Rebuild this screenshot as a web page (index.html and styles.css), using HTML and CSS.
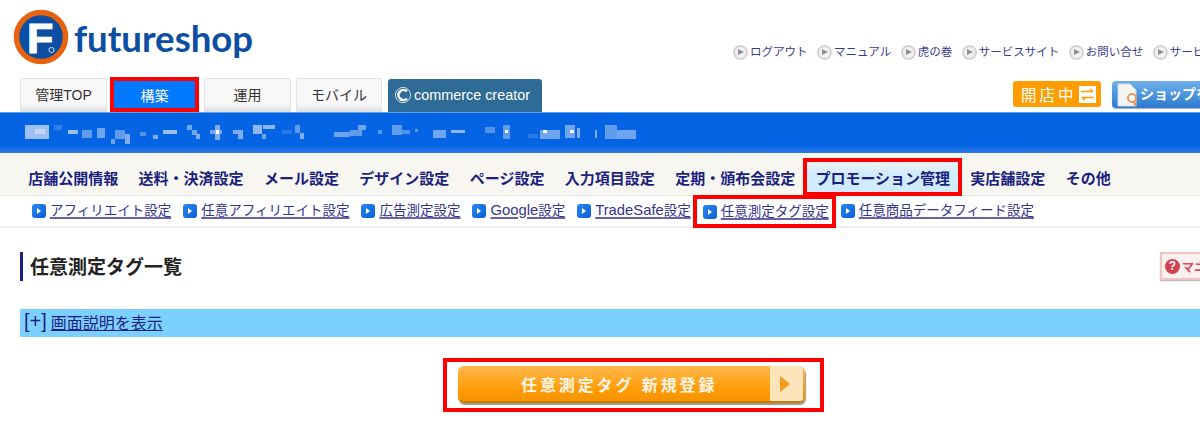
FILE: index.html
```html
<!DOCTYPE html>
<html lang="ja">
  <head>
    <meta charset="UTF-8" />
    <meta name="viewport" content="width=device-width, initial-scale=1.0" />
    <title>任意測定タグ一覧</title>
    <link rel="stylesheet" href="styles.css">
  </head>
  <body>
    <header class="header-top">
      <div class="logo">
        <svg class="logo-mark" width="56" height="56" viewBox="0 0 56 56">
          <circle cx="28" cy="28" r="24.5" fill="#0b4ea2" stroke="#e8630f" stroke-width="5.5" />
          <text x="14" y="44" class="logo-f">F</text>
          <circle cx="38.5" cy="41" r="2.6" fill="none" stroke="#cfe0f2" stroke-width="1" />
        </svg>
        <span class="logo-text">futureshop</span>
      </div>
      <ul class="top-links">
        <li><i class="play"></i>ログアウト</li>
        <li><i class="play"></i>マニュアル</li>
        <li><i class="play"></i>虎の巻</li>
        <li><i class="play"></i>サービスサイト</li>
        <li><i class="play"></i>お問い合せ</li>
        <li><i class="play"></i>サービス</li>
      </ul>
    </header>

    <div class="tab-row">
      <a class="tab">管理TOP</a>
      <a class="tab tab-active">構築</a>
      <a class="tab tab-wide">運用</a>
      <a class="tab tab-mobile">モバイル</a>
      <a class="tab-cc">
        <svg width="18" height="18" viewBox="0 0 18 18">
          <circle cx="9" cy="9" r="7.6" fill="none" stroke="#cfe0ec" stroke-width="1" />
          <path d="M13 5.4a5 5 0 1 0 0 7.2" fill="none" stroke="#fff" stroke-width="2.6" />
        </svg>
        commerce creator
      </a>
      <div class="status-btn">
        開店中
        <svg width="17" height="17" viewBox="0 0 17 17">
          <rect width="17" height="17" fill="#fff" />
          <path d="M2 5.5h12M11 3l3 2.5M15 11.5H3M6 14l-3-2.5" fill="none" stroke="#ff9d00" stroke-width="1.6" />
        </svg>
      </div>
      <div class="shop-btn">
        <svg width="24" height="26" viewBox="0 0 24 26">
          <path d="M2 2h12l6 6v16H2z" fill="#f4f4f0" stroke="#cfd8e0" />
          <circle cx="16" cy="16" r="4" fill="#fff" stroke="#e8965c" stroke-width="2" />
          <path d="M18 20l2 4" stroke="#e8965c" stroke-width="2.4" />
        </svg>
        <span>ショップを</span>
      </div>
    </div>

    <div class="shop-bar">
      <svg width="640" height="38" viewBox="0 112 640 38" fill="#9dbff2">
        <rect x="25" y="125" width="24" height="14" />
        <rect x="35" y="129" width="10" height="5" fill="#c4d9f8" />
        <rect x="54" y="125" width="8" height="5" opacity=".3" />
        <rect x="68" y="130" width="10" height="4" />
        <rect x="82" y="130" width="10" height="8" opacity=".6" />
        <rect x="97" y="128" width="8" height="10" opacity=".7" />
        <rect x="115" y="130" width="10" height="9" opacity=".6" />
        <rect x="111" y="139" width="4" height="5" opacity=".7" />
        <rect x="125" y="134" width="5" height="10" opacity=".8" />
        <rect x="140" y="132" width="6" height="4" opacity=".5" />
        <rect x="153" y="135" width="5" height="4" opacity=".8" />
        <rect x="163" y="130" width="14" height="4" />
        <rect x="187" y="125" width="5" height="5" opacity=".7" />
        <rect x="192" y="130" width="5" height="5" opacity=".7" />
        <rect x="196" y="134" width="4" height="5" opacity=".8" />
        <rect x="210" y="130" width="12" height="4" opacity=".7" />
        <rect x="215" y="125" width="5" height="15" opacity=".8" />
        <rect x="216" y="130" width="3" height="4" fill="#fff" />
        <rect x="233" y="130" width="10" height="4" opacity=".8" />
        <rect x="238" y="134" width="5" height="5" opacity=".8" />
        <rect x="253" y="125" width="9" height="9" opacity=".9" />
        <rect x="263" y="125" width="12" height="4" opacity=".9" />
        <rect x="262" y="134" width="4" height="5" opacity=".7" />
        <rect x="282" y="130" width="10" height="4" opacity=".25" />
        <rect x="295" y="125" width="5" height="8" opacity=".6" />
        <rect x="300" y="133" width="4" height="6" opacity=".8" />
        <rect x="334" y="132" width="16" height="5" opacity=".7" />
        <rect x="350" y="130" width="12" height="6" opacity=".6" />
        <rect x="358" y="125" width="8" height="5" opacity=".7" />
        <rect x="378" y="130" width="4" height="4" opacity=".5" />
        <rect x="392" y="125" width="10" height="10" opacity=".6" />
        <rect x="402" y="130" width="8" height="4" opacity=".5" />
        <rect x="415" y="129" width="3" height="3" opacity=".6" />
        <rect x="433" y="130" width="13" height="8" opacity=".7" />
        <rect x="451" y="130" width="14" height="3" opacity=".9" />
        <rect x="485" y="127" width="10" height="6" opacity=".5" />
        <rect x="503" y="125" width="7" height="14" opacity=".6" />
        <rect x="505" y="130" width="3" height="3" fill="#fff" />
        <rect x="528" y="134" width="10" height="4" opacity=".25" />
        <rect x="540" y="130" width="20" height="9" opacity=".7" />
        <rect x="543" y="130" width="4" height="3" fill="#fff" />
        <rect x="565" y="125" width="10" height="13" opacity=".7" />
        <rect x="570" y="130" width="4" height="3" fill="#fff" />
        <rect x="577" y="128" width="3" height="10" opacity=".8" />
        <rect x="595" y="130" width="2" height="8" opacity=".8" />
        <rect x="605" y="125" width="12" height="14" opacity=".6" />
        <rect x="617" y="130" width="19" height="9" opacity=".7" />
      </svg>
    </div>

    <nav class="main-nav">
      <a>店舗公開情報</a>
      <a>送料・決済設定</a>
      <a>メール設定</a>
      <a>デザイン設定</a>
      <a>ページ設定</a>
      <a>入力項目設定</a>
      <a>定期・頒布会設定</a>
      <a class="nav-current">プロモーション管理</a>
      <a>実店舗設定</a>
      <a>その他</a>
    </nav>

    <nav class="sub-nav">
      <div class="sub-item"><i class="chev"></i><a>アフィリエイト設定</a></div>
      <div class="sub-item"><i class="chev"></i><a>任意アフィリエイト設定</a></div>
      <div class="sub-item"><i class="chev"></i><a>広告測定設定</a></div>
      <div class="sub-item"><i class="chev"></i><a><span class="latin">Google</span>設定</a></div>
      <div class="sub-item"><i class="chev"></i><a><span class="latin">TradeSafe</span>設定</a></div>
      <div class="sub-item sub-current"><i class="chev"></i><a>任意測定タグ設定</a></div>
      <div class="sub-item"><i class="chev"></i><a>任意商品データフィード設定</a></div>
    </nav>

    <div class="page-title">
      <h1>任意測定タグ一覧</h1>
      <div class="manual-btn"><span class="manual-q">?</span>マニュアル</div>
    </div>

    <div class="help-band">
      <span class="help-toggle">[+]</span>
      <a>画面説明を表示</a>
    </div>

    <div class="register-wrap">
      <div class="register-mark">
        <div class="register-btn">
          <span class="register-label">任意測定タグ 新規登録</span>
          <span class="register-arrow"></span>
        </div>
      </div>
    </div>
  </body>
</html>
```

FILE: styles.css
```css
* {
  box-sizing: border-box;
}

body {
  font-family: "Liberation Sans", "Noto Sans CJK JP", sans-serif;
  background-color: #fff;
  color: #333;
  margin: 0;
  padding: 0;
  height: 434px;
  overflow: hidden;
}

/* header */
.header-top {
  display: flex;
  height: 78px;
}

.logo {
  display: flex;
  width: 733px;
  flex-shrink: 0;
  padding: 9px 0 0 13px;
}

.logo-f {
  font-family: "Liberation Sans", sans-serif;
  font-size: 43px;
  font-weight: bold;
  fill: #fff;
  stroke: #fff;
  stroke-width: 1.2px;
}

.logo-text {
  font-family: "Lato", sans-serif;
  font-size: 36.6px;
  font-weight: 700;
  line-height: 56px;
  color: #0b4ea2;
  margin-left: 5px;
  margin-top: 1px;
}

.top-links {
  display: flex;
  gap: 9.5px;
  list-style: none;
  margin: 44px 0 0;
  padding: 0;
  height: 16px;
  font-size: 11.5px;
  line-height: 16px;
  color: #3a3a8c;
  white-space: nowrap;
}

.top-links li {
  display: flex;
  align-items: center;
  gap: 2px;
}

.play {
  position: relative;
  display: block;
  width: 15px;
  height: 15px;
  border-radius: 50%;
  background-color: #f1f1f1;
  border: 2px solid #d4d4d4;
}

.play::after {
  content: "";
  position: absolute;
  left: 3px;
  top: 2px;
  border-left: 6px solid #8f8f8f;
  border-top: 3.5px solid transparent;
  border-bottom: 3.5px solid transparent;
}

/* tabs */
.tab-row {
  display: flex;
  align-items: flex-end;
  height: 34px;
  padding-left: 20px;
}

.tab {
  display: flex;
  align-items: center;
  justify-content: center;
  width: 87px;
  height: 34px;
  padding-bottom: 3px;
  font-size: 14px;
  color: #333;
  background: linear-gradient(#f8f8f8 75%, #dedede);
  border: 1px solid #e2e2e2;
  border-bottom: 0;
  border-radius: 3px 3px 0 0;
}

.tab-active {
  width: 89px;
  height: 35px;
  margin-left: 3px;
  padding-bottom: 0;
  color: #fff;
  background: #0078ff;
  border: 4px solid #f00;
  border-radius: 0;
}

.tab-wide {
  margin-left: 5px;
}

.tab-mobile {
  width: 86px;
  margin-left: 5px;
}

.tab-cc {
  display: flex;
  align-items: center;
  gap: 2px;
  width: 154px;
  height: 33px;
  margin-left: 6px;
  padding: 0 0 2px 6px;
  font-size: 14.4px;
  color: #fff;
  background-color: #2e6b96;
  border-radius: 3px 3px 0 0;
}

.status-btn {
  display: flex;
  align-items: center;
  justify-content: space-between;
  width: 88px;
  height: 26px;
  margin: 0 11px 5px auto;
  padding: 0 5px 0 8px;
  font-size: 15.5px;
  letter-spacing: 3px;
  color: #fff;
  background-color: #ff9d00;
  border-radius: 3px;
}

.shop-btn {
  display: flex;
  align-items: center;
  width: 88px;
  height: 27px;
  margin-bottom: 4px;
  padding-left: 4px;
  overflow: hidden;
  font-size: 14px;
  font-weight: bold;
  white-space: nowrap;
  color: #fff;
  background: linear-gradient(#6fb0ea, #2c7ad0);
  border-radius: 4px 0 0 4px;
  box-shadow: 0 1px 1px #aaa;
}

.shop-btn svg {
  flex-shrink: 0;
}

.shop-btn span {
  padding-bottom: 4px;
}

/* shop name bar */
.shop-bar {
  height: 41px;
  background: linear-gradient(#0564e3 82%, #2f7cec);
  border-top: 1px solid #5c9cf0;
}

.shop-bar svg {
  display: block;
  margin-top: -1px;
}

/* main nav */
.main-nav {
  display: flex;
  height: 43px;
  padding-left: 18px;
  background-color: #f7f6f0;
  border-bottom: 1px solid #e6e6e6;
}

.main-nav a {
  display: flex;
  align-items: center;
  padding: 6px 10.2px 0;
  font-size: 15px;
  font-weight: bold;
  white-space: nowrap;
  color: #1b1f7e;
}

.main-nav .nav-current {
  height: 38px;
  margin: 5px -2px -1px;
  padding: 0 8px;
  border: 4px solid #f00;
  background: linear-gradient(#f2f2f2, #d2ecfb 35%, #cfeafc);
}

/* sub nav */
.sub-nav {
  display: flex;
  gap: 12px;
  height: 33px;
  margin-top: -1px;
  padding-left: 32px;
  border-bottom: 2px solid #eee;
}

.sub-item {
  display: flex;
  align-items: center;
  gap: 4px;
  font-size: 13.5px;
  white-space: nowrap;
}

.sub-item a {
  margin-bottom: 4px;
  color: #35358c;
  text-decoration: underline;
  text-decoration-color: #6a62a8;
  text-decoration-thickness: 2px;
  text-underline-offset: 2px;
}

.latin {
  font-size: 14.8px;
}

.chev {
  position: relative;
  display: block;
  width: 14px;
  height: 14px;
  background: linear-gradient(135deg, #2a86f0, #0a60d8);
  border-radius: 3px;
}

.chev::after {
  content: "";
  position: absolute;
  left: 5px;
  top: 4px;
  border-left: 4px solid #fff;
  border-top: 3px solid transparent;
  border-bottom: 3px solid transparent;
}

.sub-current {
  height: 33px;
  margin: 0 -7px 0 -10px;
  padding: 0 3px 0 6px;
  border: 4px solid #f00;
}

/* page title */
.page-title {
  display: flex;
  justify-content: space-between;
  height: 29px;
  margin-top: 24px;
  margin-left: 20px;
  border-left: 3px solid #1b1f7e;
}

.page-title h1 {
  margin: 0 0 0 7px;
  padding-top: 1px;
  font-size: 19px;
  font-weight: bold;
  line-height: 29px;
  color: #222;
}

.manual-btn {
  display: flex;
  align-items: center;
  gap: 2px;
  width: 40px;
  height: 28px;
  padding-left: 3px;
  overflow: hidden;
  font-size: 12px;
  font-weight: bold;
  white-space: nowrap;
  color: #e04a55;
  background-color: #fdf0f0;
  border: 2px solid #f0c4c4;
  border-right: 0;
  box-shadow: 0 1px 1px #bbb;
}

.manual-q {
  flex-shrink: 0;
  width: 15px;
  height: 15px;
  border-radius: 50%;
  font-size: 12px;
  line-height: 15px;
  text-align: center;
  color: #fff;
  background-color: #d0424c;
}

/* help band */
.help-band {
  display: flex;
  align-items: center;
  gap: 4px;
  height: 28px;
  margin-top: 28px;
  margin-left: 20px;
  padding: 0 0 3px 4px;
  font-size: 16px;
  color: #1b1f7e;
  background-color: #7cd0ff;
}

.help-toggle {
  margin-bottom: 1px;
  font-size: 20px;
  line-height: 1;
}

.help-band a {
  text-decoration: underline;
}

/* register button */
.register-wrap {
  display: flex;
  justify-content: center;
  margin-top: 21px;
  padding-left: 67px;
  width: 1200px;
}

.register-mark {
  width: 381px;
  height: 54px;
  padding: 4px 15px 0 11px;
  border: 4px solid #f00;
}

.register-btn {
  display: flex;
  align-items: center;
  height: 37px;
  background: linear-gradient(#ffb84d, #ff9a05 70%, #f59300);
  border-bottom: 2px solid #c97a00;
  border-radius: 6px;
  box-shadow: 1px 2px 1px #999;
  overflow: hidden;
}

.register-label {
  flex: 1;
  padding-left: 63px;
  font-size: 16px;
  font-weight: bold;
  letter-spacing: 2.9px;
  white-space: nowrap;
  color: #fff6e6;
}

.register-arrow {
  position: relative;
  width: 33px;
  height: 100%;
  margin-right: 2px;
  background-color: #ffe3bb;
}

.register-arrow::after {
  content: "";
  position: absolute;
  left: 10px;
  top: 10px;
  border-left: 10px solid #f59a1e;
  border-top: 8px solid transparent;
  border-bottom: 8px solid transparent;
}
```
